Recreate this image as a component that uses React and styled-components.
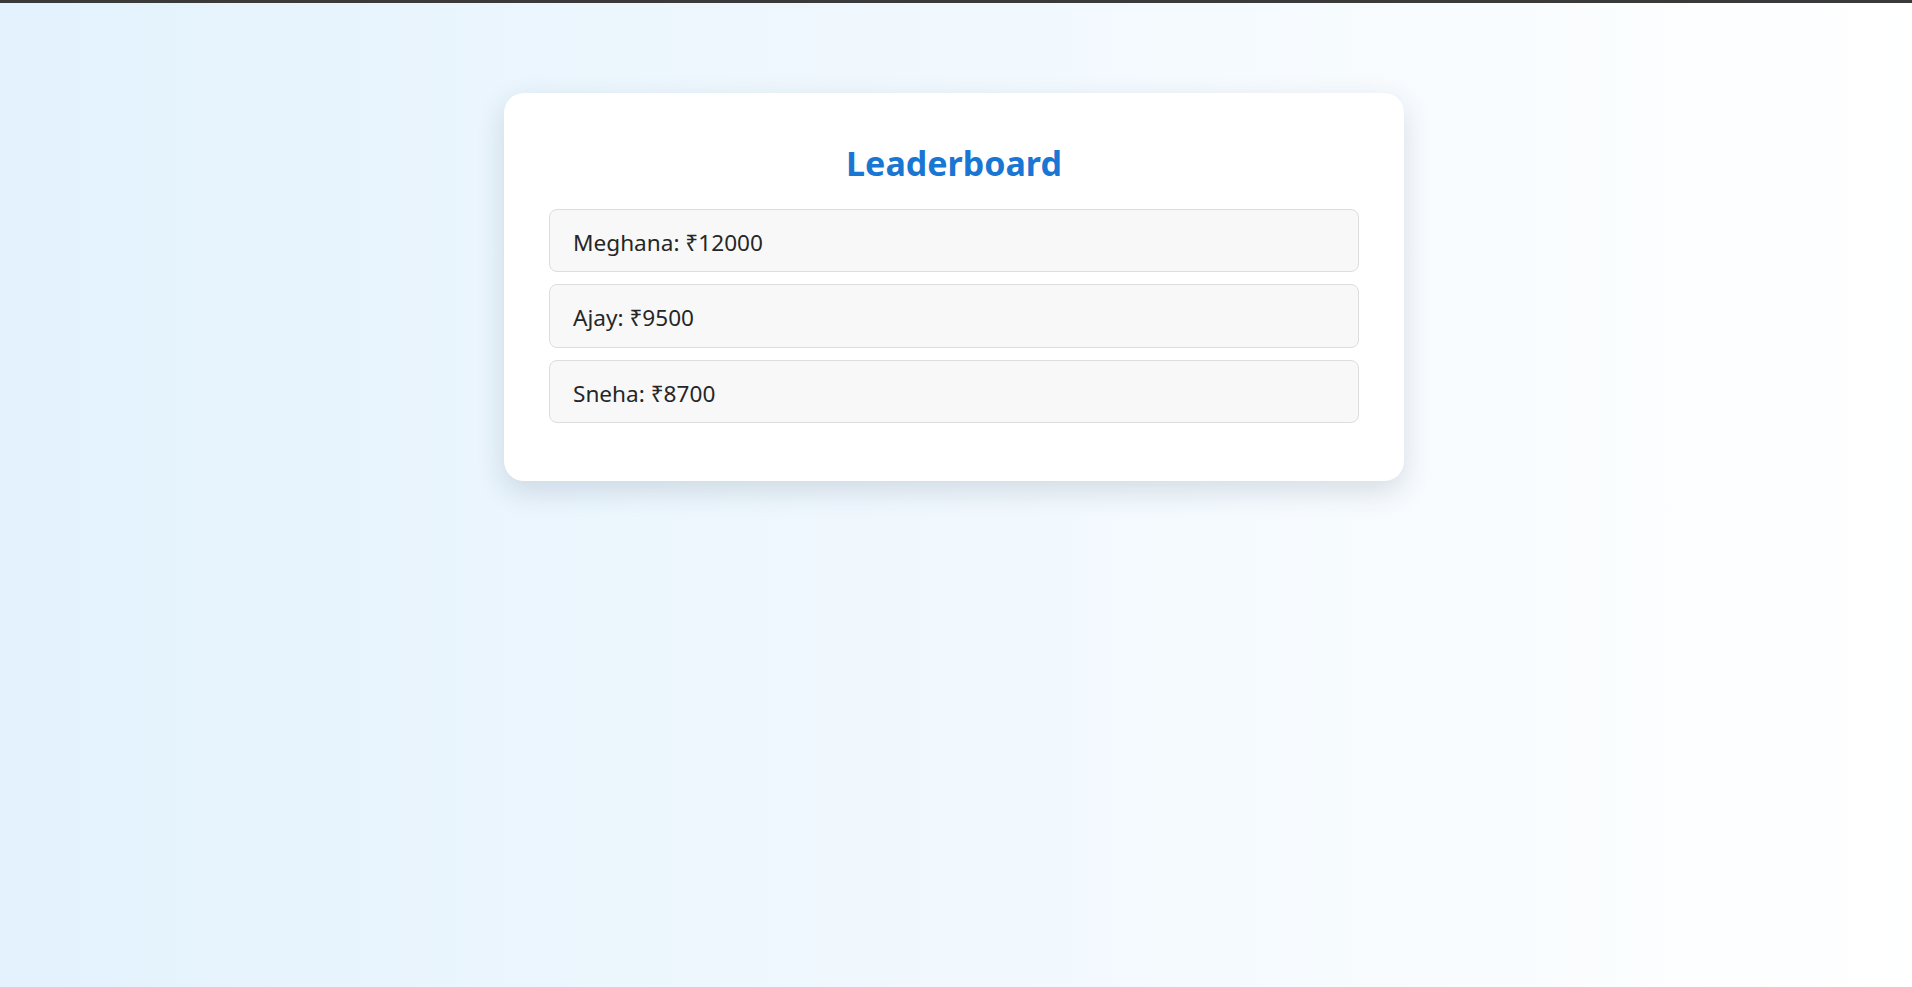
import React from "react";
import styled, { createGlobalStyle } from "styled-components";

const Global = createGlobalStyle`
  html, body { margin: 0; padding: 0; }
  body {
    min-height: 100vh;
    font-family: "Noto Sans", "Open Sans", sans-serif;
    background: linear-gradient(to right, #e3f2fd, #ffffff);
    border-top: 3px solid #3a3a3a;
    box-sizing: border-box;
  }
`;

const Page = styled.div`
  display: flex;
  justify-content: center;
  padding: 90px 4px 0 0;
`;

const Card = styled.div`
  width: 900px;
  box-sizing: border-box;
  background: #ffffff;
  border-radius: 20px;
  padding: 50px 45px 58px;
  box-shadow: 0 10px 28px rgba(40, 60, 90, 0.16);
`;

const Title = styled.h2`
  margin: 0 0 25px;
  text-align: center;
  color: #1976d2;
  font-size: 34px;
  font-weight: 700;
  line-height: 1.2;
`;

const List = styled.ul`
  list-style: none;
  margin: 0;
  padding: 0;
  display: flex;
  flex-direction: column;
  gap: 12px;
`;

const Row = styled.li`
  height: 63.5px;
  box-sizing: border-box;
  display: flex;
  align-items: center;
  padding: 3px 23px 0;
  background: #f8f8f8;
  border: 1px solid #dddddd;
  border-radius: 8px;
  color: #262626;
  font-size: 22.6px;
`;

const players = [
  { name: "Meghana", amount: 12000 },
  { name: "Ajay", amount: 9500 },
  { name: "Sneha", amount: 8700 },
];

export default function App() {
  return (
    <>
      <Global />
      <Page>
        <Card>
          <Title>Leaderboard</Title>
          <List>
            {players.map((p) => (
              <Row key={p.name}>
                {p.name}: ₹{p.amount}
              </Row>
            ))}
          </List>
        </Card>
      </Page>
    </>
  );
}
